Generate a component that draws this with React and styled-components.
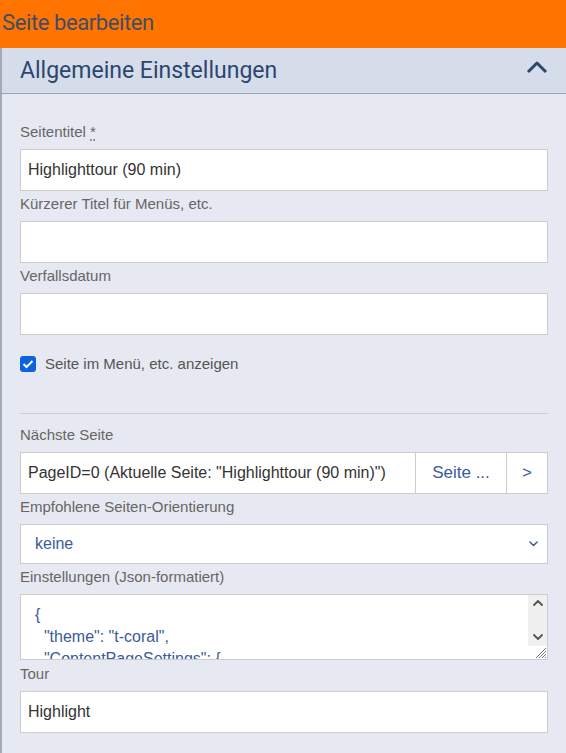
import styled, {createGlobalStyle} from "styled-components";

const GlobalStyle = createGlobalStyle`
    html, body {
        margin: 0;
        padding: 0;
        background: #e6e9f1;
    }
    body {
        font-family: "Liberation Sans", Arial, sans-serif;
    }
`

const jsonSettings = `{
  "theme": "t-coral",
  "ContentPageSettings": {`

const TopBar = styled.header`
    height: 48px;
    box-sizing: border-box;
    background: #ff7400;
    display: flex;
    align-items: center;
    padding: 0 0 4px 2px;
    font-family: Roboto, sans-serif;
    font-size: 22px;
    letter-spacing: -0.4px;
    color: #3e4d68;
`

const Panel = styled.section`
    border-left: 2px solid #a2aaba;
    background: #e6e9f1;
    min-height: 705px;
`

const PanelHeader = styled.div`
    height: 45px;
    display: flex;
    align-items: center;
    justify-content: space-between;
    padding: 0 18px;
    background: #d6ddea;
    border-bottom: 1px solid #9ba4b6;
    font-family: Roboto, sans-serif;
    font-size: 23px;
    color: #2c4670;

    & > svg {
        margin-bottom: 8px;
    }
`

const PanelBody = styled.div`
    display: flex;
    flex-direction: column;
    padding: 29px 18px 20px 18px;
`

const Field = styled.div`
    display: flex;
    flex-direction: column;
    margin-top: ${props => props.$first ? '0' : '4px'};
`

const Label = styled.label`
    font-size: 15px;
    line-height: 18px;
    color: #666;
    margin-bottom: 8px;

    & abbr {
        text-decoration: underline dotted;
        text-underline-offset: 3px;
    }
`

const Input = styled.input`
    box-sizing: border-box;
    height: 42px;
    width: 100%;
    border: 1px solid #ccc;
    background: #fff;
    padding: 0 7px;
    font-family: "Liberation Sans", Arial, sans-serif;
    font-size: 16px;
    color: #333;
    outline: none;
`

const CheckRow = styled.label`
    display: flex;
    align-items: center;
    gap: 9px;
    margin-top: 20px;
    font-size: 15px;
    color: #555;
`

const CheckBox = styled.span`
    width: 16px;
    height: 16px;
    border-radius: 3px;
    background: #0e62e0;
    display: flex;
    align-items: center;
    justify-content: center;
`

const Divider = styled.hr`
    border: none;
    border-top: 1px solid #c9cdd6;
    margin: 41px 0 12px 0;
    width: 100%;
`

const Group = styled.div`
    display: flex;
    height: 42px;
    background: #fff;
    border: 1px solid #ccc;
    box-sizing: border-box;
`

const GroupText = styled.div`
    flex: 1;
    display: flex;
    align-items: center;
    padding: 0 7px;
    font-size: 16px;
    color: #333;
    white-space: nowrap;
    overflow: hidden;
`

const GroupButton = styled.button`
    width: ${props => props.$width};
    border: none;
    border-left: 1px solid #ccc;
    background: #fff;
    font-family: "Liberation Sans", Arial, sans-serif;
    font-size: 17px;
    color: #3a5b9a;
    padding: 0;
`

const Select = styled.div`
    box-sizing: border-box;
    height: 40px;
    border: 1px solid #ccc;
    background: #fff;
    display: flex;
    align-items: center;
    justify-content: space-between;
    padding: 0 9px 0 14px;
    font-size: 16px;
    color: #3a5b9a;
`

const TextArea = styled.div`
    box-sizing: border-box;
    height: 66px;
    border: 1px solid #ccc;
    background: #fff;
    display: flex;
    overflow: hidden;
`

const TextAreaContent = styled.pre`
    flex: 1;
    margin: 0;
    padding: 9px 14px 0 14px;
    font-family: "Liberation Sans", Arial, sans-serif;
    font-size: 16px;
    line-height: 22px;
    color: #3a5b9a;
    overflow: hidden;
`

const ScrollBar = styled.div`
    width: 19px;
    display: flex;
    flex-direction: column;
    align-items: center;
`

const ScrollTrack = styled.div`
    width: 100%;
    height: 54px;
    background: #f0f0f0;
    display: flex;
    flex-direction: column;
    align-items: center;
    justify-content: space-between;
    padding: 5px 0 6px 0;
    box-sizing: border-box;
`

const Grip = styled.div`
    flex: 1;
    width: 100%;
    display: flex;
    align-items: flex-end;
    justify-content: flex-end;
`

const TourField = styled(Field)`
    margin-top: 5px;
`

function Chevron({up, size = 12, color, width = 2}) {
    return (
        <svg width={size} height={size * 0.6} viewBox="0 0 10 6" fill="none">
            <path d={up ? "M1 5 L5 1 L9 5" : "M1 1 L5 5 L9 1"} stroke={color} strokeWidth={width} strokeLinecap="round" strokeLinejoin="round"/>
        </svg>
    )
}

export default function App() {
    return (
        <>
            <GlobalStyle/>
            <TopBar>Seite bearbeiten</TopBar>
            <Panel>
                <PanelHeader>
                    Allgemeine Einstellungen
                    <svg width="22" height="14" viewBox="0 0 22 14" fill="none">
                        <path d="M2 12 L11 3 L20 12" stroke="#2c4670" strokeWidth="3" strokeLinejoin="round"/>
                    </svg>
                </PanelHeader>

                <PanelBody>
                    <Field $first>
                        <Label>Seitentitel <abbr>*</abbr></Label>
                        <Input defaultValue="Highlighttour (90 min)"/>
                    </Field>
                    <Field>
                        <Label>Kürzerer Titel für Menüs, etc.</Label>
                        <Input/>
                    </Field>
                    <Field>
                        <Label>Verfallsdatum</Label>
                        <Input/>
                    </Field>

                    <CheckRow>
                        <CheckBox>
                            <svg width="12" height="10" viewBox="0 0 12 10" fill="none">
                                <path d="M1.5 5 L4.5 8 L10.5 2" stroke="#fff" strokeWidth="2"/>
                            </svg>
                        </CheckBox>
                        Seite im Menü, etc. anzeigen
                    </CheckRow>

                    <Divider/>

                    <Field $first>
                        <Label>Nächste Seite</Label>
                        <Group>
                            <GroupText>PageID=0 (Aktuelle Seite: "Highlighttour (90 min)")</GroupText>
                            <GroupButton $width="91px">Seite ...</GroupButton>
                            <GroupButton $width="41px">&gt;</GroupButton>
                        </Group>
                    </Field>
                    <Field>
                        <Label>Empfohlene Seiten-Orientierung</Label>
                        <Select>
                            keine
                            <Chevron size={9} color="#3a5b9a" width={1.6}/>
                        </Select>
                    </Field>
                    <Field>
                        <Label>Einstellungen (Json-formatiert)</Label>
                        <TextArea>
                            <TextAreaContent>{jsonSettings}</TextAreaContent>
                            <ScrollBar>
                                <ScrollTrack>
                                    <Chevron up size={10} color="#555" width={1.8}/>
                                    <Chevron size={10} color="#555" width={1.8}/>
                                </ScrollTrack>
                                <Grip>
                                    <svg width="13" height="13" viewBox="0 0 13 13" fill="none" stroke="#777" strokeWidth="1">
                                        <path d="M12 2 L2 12 M12 5 L5 12 M12 8 L8 12 M12 11 L11 12"/>
                                    </svg>
                                </Grip>
                            </ScrollBar>
                        </TextArea>
                    </Field>
                    <TourField>
                        <Label>Tour</Label>
                        <Input defaultValue="Highlight"/>
                    </TourField>
                </PanelBody>
            </Panel>
        </>
    )
}
